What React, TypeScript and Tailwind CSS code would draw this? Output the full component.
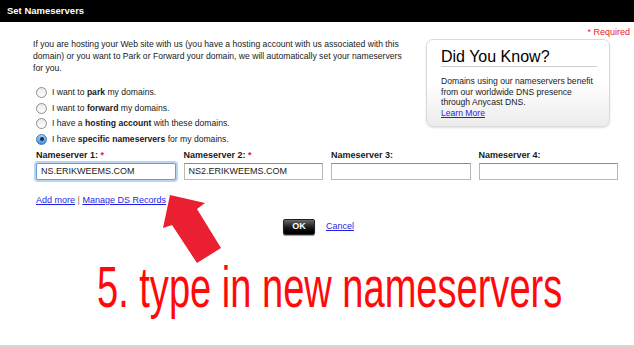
import React from 'react'

const radios = [
	{ pre: 'I want to ', bold: 'park', post: ' my domains.', checked: false },
	{ pre: 'I want to ', bold: 'forward', post: ' my domains.', checked: false },
	{ pre: 'I have a ', bold: 'hosting account', post: ' with these domains.', checked: false },
	{ pre: 'I have ', bold: 'specific nameservers', post: ' for my domains.', checked: true },
]

const servers = [
	{ label: 'Nameserver 1:', required: true, value: 'NS.ERIKWEEMS.COM', focused: true },
	{ label: 'Nameserver 2:', required: true, value: 'NS2.ERIKWEEMS.COM', focused: false },
	{ label: 'Nameserver 3:', required: false, value: '', focused: false },
	{ label: 'Nameserver 4:', required: false, value: '', focused: false },
]

function Radio({ checked }: { checked: boolean }) {
	if (checked) {
		return (
			<span className="w-[11px] h-[11px] rounded-full border border-[#3a78c4] bg-gradient-to-b from-[#a9cdf3] to-[#3f8ee0] flex items-center justify-center shrink-0">
				<span className="w-[4px] h-[4px] rounded-full bg-[#1b2c44]" />
			</span>
		)
	}
	return (
		<span className="w-[11px] h-[11px] rounded-full border border-[#8d8d8d] bg-gradient-to-b from-[#e9e9e9] to-[#ffffff] shrink-0" />
	)
}

export default function App() {
	return (
		<div className="relative w-[634px] h-[347px] overflow-hidden bg-white border-b-2 border-[#d6d6d6] font-['Liberation_Sans',Arial,sans-serif] text-[#1a1a1a]">
			{/* Title bar */}
			<div className="h-[22px] bg-black text-white font-bold text-[9.5px] flex items-center px-[7px]">
				Set Nameservers
			</div>

			<div className="flex justify-end pr-[4px] pt-[5px] text-[9px] leading-[11px] text-[#e8202a]">
				* Required
			</div>

			<div className="flex pl-[33px]">
				<div className="w-[380px]">
					<p className="text-[8.6px] leading-[12px]">
						If you are hosting your Web site with us (you have a hosting account with us associated with this domain) or you want to Park or Forward your domain, we will automatically set your nameservers for you.
					</p>
					<div className="mt-[11px] pl-[3px] flex flex-col">
						{radios.map((r) => (
							<div key={r.bold} className="h-[15.5px] flex items-center gap-[5px] text-[8.6px]">
								<Radio checked={r.checked} />
								<span>
									{r.pre}
									<b>{r.bold}</b>
									{r.post}
								</span>
							</div>
						))}
					</div>
				</div>

				{/* Did You Know box */}
				<div className="ml-auto mr-[24px] mt-[1px] w-[184px] h-[88px] rounded-[7px] border border-[#d9d9d9] bg-gradient-to-b from-white via-white to-[#ececec] shadow-[0_1px_2px_rgba(0,0,0,0.12)] pl-[14px] pr-[12px] pt-[8px]">
					<div className="text-[16px] leading-[18px] text-black border-b border-[#cfcfcf]">
						Did You Know?
					</div>
					<div className="text-[8.6px] leading-[10.7px] mt-[9px] whitespace-nowrap">
						Domains using our nameservers benefit
						<br />
						from our worldwide DNS presence
						<br />
						through Anycast DNS.
						<br />
						<a className="text-[#1f1fe6] underline">Learn More</a>
					</div>
				</div>
			</div>

			{/* Nameserver inputs */}
			<div className="grid grid-cols-4 gap-x-[8px] w-[582px] ml-[36px] mt-[3px]">
				{servers.map((s) => (
					<div key={s.label} className="flex flex-col">
						<div className="text-[9px] leading-[11px] font-bold h-[12px]">
							{s.label}
							{s.required && <span className="text-[#e8202a]"> *</span>}
						</div>
						<div
							className={
								s.focused
									? 'mt-[1px] h-[17px] border border-[#6f9bd3] rounded-[2px] shadow-[0_0_0_2px_#b9d3f1] flex items-center px-[4px] text-[9px] bg-white'
									: 'mt-[1px] h-[17px] border border-[#b8b8b8] border-t-[#8c8c8c] flex items-center px-[4px] text-[9px] bg-white'
							}
						>
							{s.value}
						</div>
					</div>
				))}
			</div>

			<div className="ml-[36px] mt-[15px] text-[9px] leading-[11px] text-[#777]">
				<a className="text-[#1f1fe6] underline">Add more</a> |{' '}
				<a className="text-[#1f1fe6] underline">Manage DS Records</a>
			</div>

			<div className="flex items-center ml-[283px] mt-[13px] gap-[11px]">
				<div className="w-[32px] h-[16px] rounded-[2px] border border-[#222] bg-gradient-to-b from-[#6a6a6a] via-[#202020] to-[#000] shadow-[0_1px_1px_rgba(0,0,0,0.4)] text-white font-bold text-[9px] flex items-center justify-center">
					OK
				</div>
				<a className="text-[#1f1fe6] underline text-[9px]">Cancel</a>
			</div>

			{/* Annotation */}
			<div className="ml-[97px] mt-[22px] text-[#ff0a0a] text-[58px] leading-[60px] font-['Liberation_Sans',sans-serif] whitespace-nowrap origin-left scale-x-[0.656]">
				5. type in new nameservers
			</div>

			<svg className="absolute left-0 top-0" width="634" height="347" viewBox="0 0 634 347">
				<polygon
					points="170,195 205,203 197,209 221,248 197,263 172,225 163,228"
					fill="#ea1f30"
				/>
			</svg>
		</div>
	)
}
